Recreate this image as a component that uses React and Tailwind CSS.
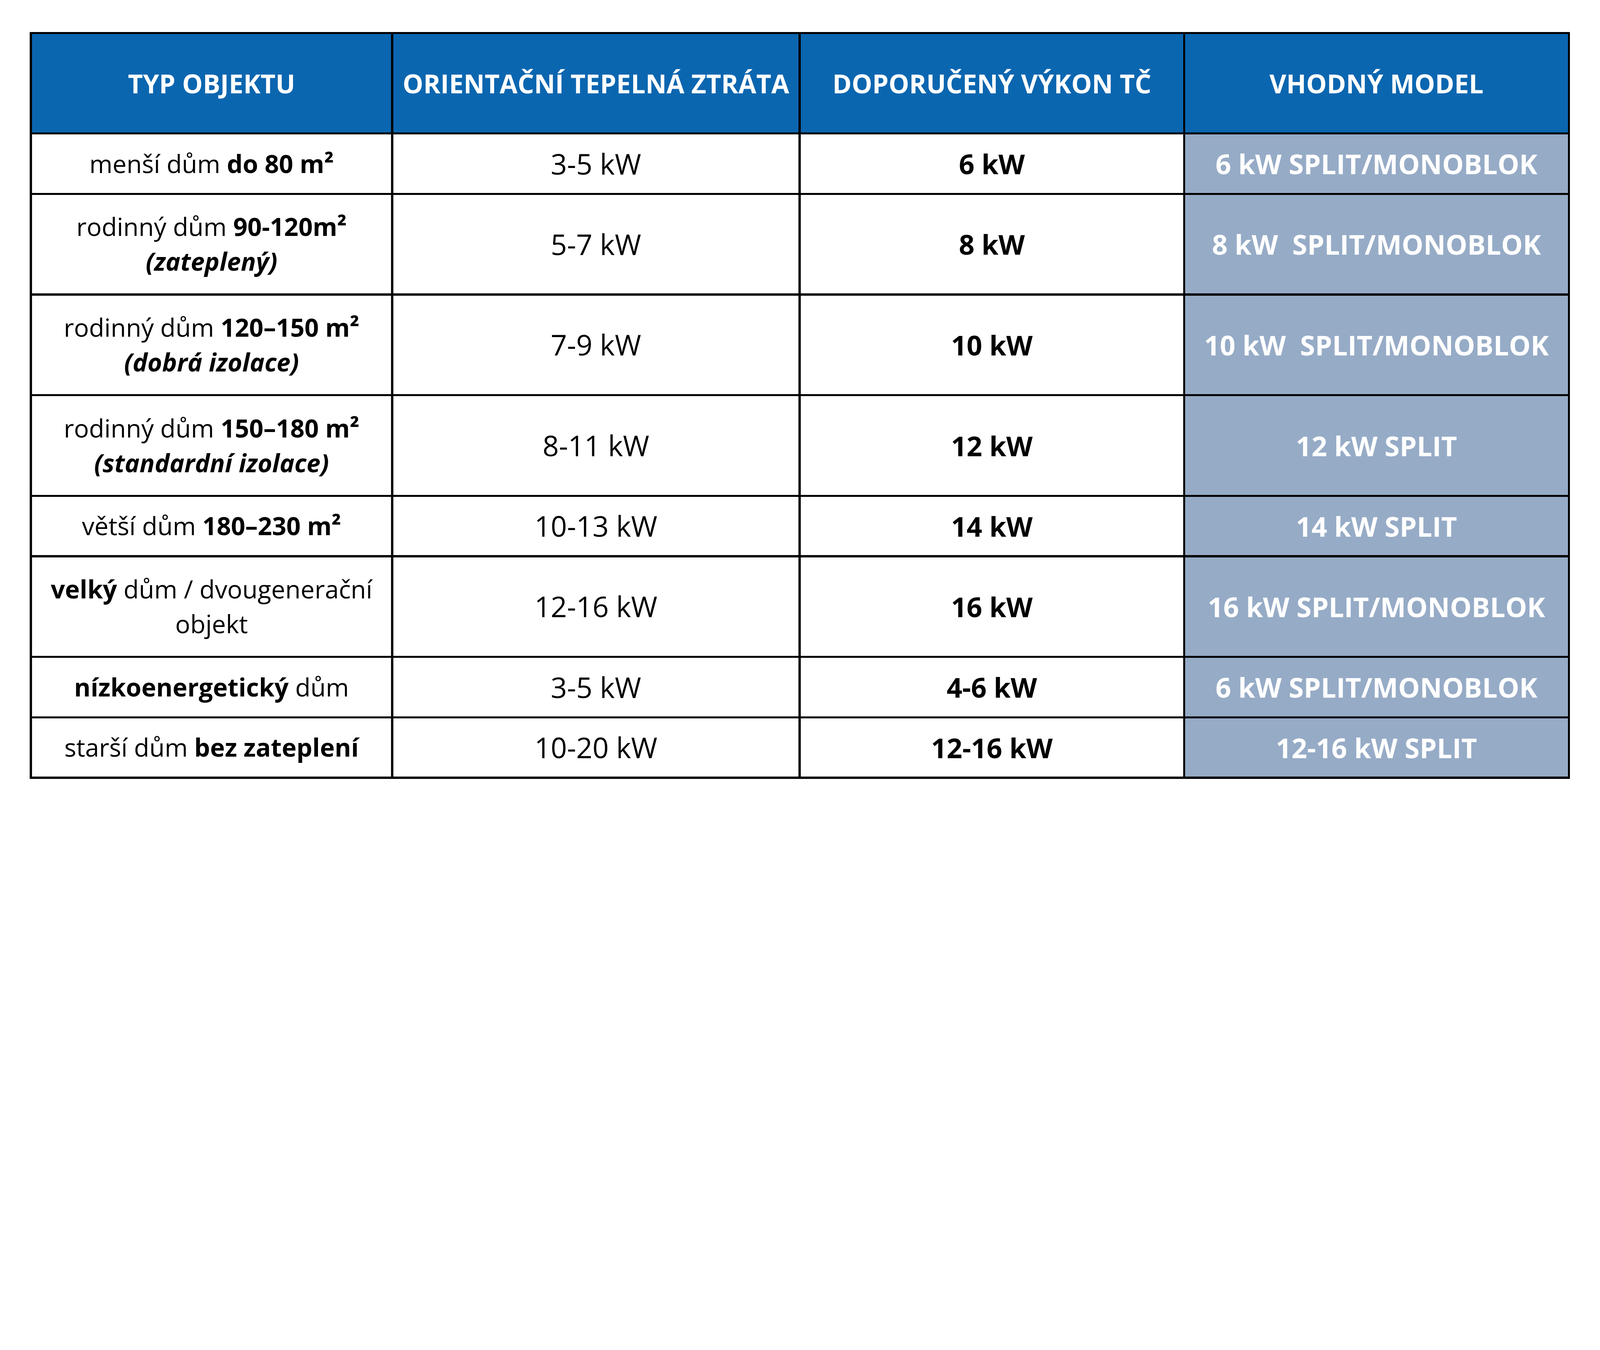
// Tabulka: doporučený výkon tepelného čerpadla podle typu objektu.

import React from "react";

const headers = [
  "TYP OBJEKTU",
  "ORIENTAČNÍ TEPELNÁ ZTRÁTA",
  "DOPORUČENÝ VÝKON TČ",
  "VHODNÝ MODEL",
];

// h = výška řádku (třída napsaná celá, aby ji Tailwind našel)
const rows = [
  {
    h: "h-[149.3px]",
    type: (
      <>
        menší dům <b>do 80 m²</b>
      </>
    ),
    loss: "3-5 kW",
    power: "6 kW",
    model: "6 kW SPLIT/MONOBLOK",
  },
  {
    h: "h-[252.4px]",
    type: (
      <>
        rodinný dům <b>90-120m²</b>
        <br />
        <b className="italic">(zateplený)</b>
      </>
    ),
    loss: "5-7 kW",
    power: "8 kW",
    model: "8 kW  SPLIT/MONOBLOK",
  },
  {
    h: "h-[252.4px]",
    type: (
      <>
        rodinný dům <b>120–150 m²</b>
        <br />
        <b className="italic">(dobrá izolace)</b>
      </>
    ),
    loss: "7-9 kW",
    power: "10 kW",
    model: "10 kW  SPLIT/MONOBLOK",
  },
  {
    h: "h-[252.4px]",
    type: (
      <>
        rodinný dům <b>150–180 m²</b>
        <br />
        <b className="italic">(standardní izolace)</b>
      </>
    ),
    loss: "8-11 kW",
    power: "12 kW",
    model: "12 kW SPLIT",
  },
  {
    h: "h-[149.3px]",
    type: (
      <>
        větší dům <b>180–230 m²</b>
      </>
    ),
    loss: "10-13 kW",
    power: "14 kW",
    model: "14 kW SPLIT",
  },
  {
    h: "h-[252.4px]",
    type: (
      <>
        <b>velký</b> dům / dvougenerační
        <br />
        objekt
      </>
    ),
    loss: "12-16 kW",
    power: "16 kW",
    model: "16 kW SPLIT/MONOBLOK",
  },
  {
    h: "h-[149.3px]",
    type: (
      <>
        <b>nízkoenergetický</b> dům
      </>
    ),
    loss: "3-5 kW",
    power: "4-6 kW",
    model: "6 kW SPLIT/MONOBLOK",
  },
  {
    h: "h-[149.3px]",
    type: (
      <>
        starší dům <b>bez zateplení</b>
      </>
    ),
    loss: "10-20 kW",
    power: "12-16 kW",
    model: "12-16 kW SPLIT",
  },
];

const cell = "flex items-center justify-center text-center";

export default function App() {
  return (
    <div className="w-full h-[2048px] overflow-hidden bg-white pl-[76.4px] pt-[81.8px] font-['Open_Sans',sans-serif] text-black">
      {/* černé pozadí mřížky dělá čáry tabulky */}
      <div className="inline-grid grid-cols-[919.7px_1037.6px_979px_979.6px] gap-[5.33px] p-[5.33px] bg-black">
        {headers.map((t) => (
          <div
            key={t}
            className={`${cell} h-[251.9px] bg-[#0b66b0] text-white font-bold text-[66.4px] leading-none`}
          >
            {t}
          </div>
        ))}

        {rows.map((r, i) => (
          <React.Fragment key={i}>
            <div className={`${cell} ${r.h} bg-white text-[64px] leading-[88.9px]`}>
              <div>{r.type}</div>
            </div>
            <div className={`${cell} ${r.h} bg-white text-[72.9px] leading-none`}>
              {r.loss}
            </div>
            <div className={`${cell} ${r.h} bg-white text-[69.9px] font-bold leading-none`}>
              {r.power}
            </div>
            <div
              className={`${cell} ${r.h} bg-[#96abc6] text-white text-[69.9px] font-bold leading-none whitespace-pre`}
            >
              {r.model}
            </div>
          </React.Fragment>
        ))}
      </div>
    </div>
  );
}
